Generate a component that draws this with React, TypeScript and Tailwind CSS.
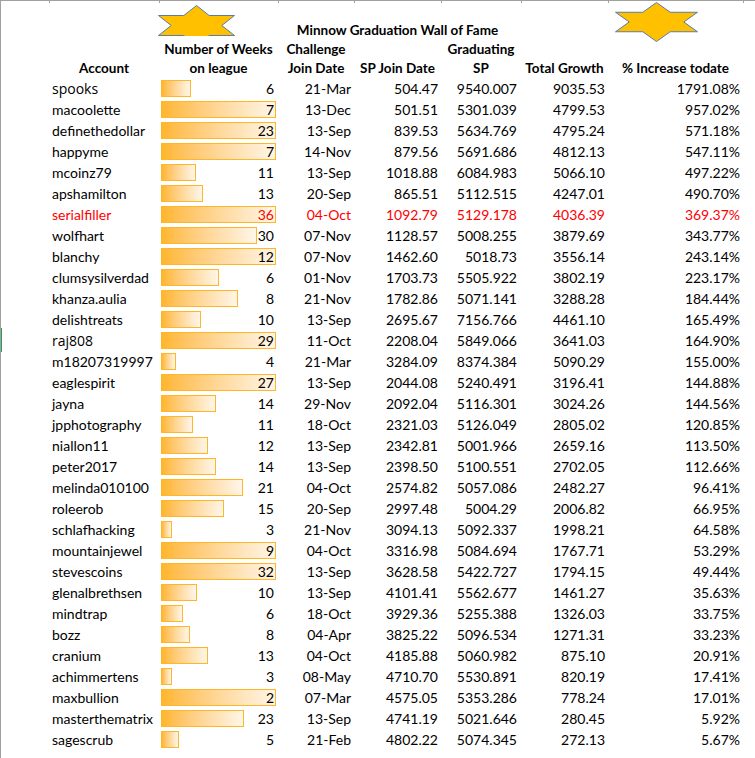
type Row = {
  name: string;
  weeks: number;
  bar: number;
  joined: string;
  spJoin: string;
  spGrad: string;
  growth: string;
  pct: string;
  red?: boolean;
  alt?: boolean;
};

const rows: Row[] = [
  { name: "spooks", weeks: 6, bar: 30, joined: "21-Mar", spJoin: "504.47", spGrad: "9540.007", growth: "9035.53", pct: "1791.08%", alt: true },
  { name: "macoolette", weeks: 7, bar: 115, joined: "13-Dec", spJoin: "501.51", spGrad: "5301.039", growth: "4799.53", pct: "957.02%" },
  { name: "definethedollar", weeks: 23, bar: 115, joined: "13-Sep", spJoin: "839.53", spGrad: "5634.769", growth: "4795.24", pct: "571.18%" },
  { name: "happyme", weeks: 7, bar: 115, joined: "14-Nov", spJoin: "879.56", spGrad: "5691.686", growth: "4812.13", pct: "547.11%" },
  { name: "mcoinz79", weeks: 11, bar: 35, joined: "13-Sep", spJoin: "1018.88", spGrad: "6084.983", growth: "5066.10", pct: "497.22%" },
  { name: "apshamilton", weeks: 13, bar: 42, joined: "20-Sep", spJoin: "865.51", spGrad: "5112.515", growth: "4247.01", pct: "490.70%" },
  { name: "serialfiller", weeks: 36, bar: 115, joined: "04-Oct", spJoin: "1092.79", spGrad: "5129.178", growth: "4036.39", pct: "369.37%", red: true },
  { name: "wolfhart", weeks: 30, bar: 96, joined: "07-Nov", spJoin: "1128.57", spGrad: "5008.255", growth: "3879.69", pct: "343.77%" },
  { name: "blanchy", weeks: 12, bar: 115, joined: "07-Nov", spJoin: "1462.60", spGrad: "5018.73", growth: "3556.14", pct: "243.14%" },
  { name: "clumsysilverdad", weeks: 6, bar: 58, joined: "01-Nov", spJoin: "1703.73", spGrad: "5505.922", growth: "3802.19", pct: "223.17%" },
  { name: "khanza.aulia", weeks: 8, bar: 77, joined: "21-Nov", spJoin: "1782.86", spGrad: "5071.141", growth: "3288.28", pct: "184.44%" },
  { name: "delishtreats", weeks: 10, bar: 40, joined: "13-Sep", spJoin: "2695.67", spGrad: "7156.766", growth: "4461.10", pct: "165.49%" },
  { name: "raj808", weeks: 29, bar: 115, joined: "11-Oct", spJoin: "2208.04", spGrad: "5849.066", growth: "3641.03", pct: "164.90%", alt: true },
  { name: "m18207319997", weeks: 4, bar: 15, joined: "21-Mar", spJoin: "3284.09", spGrad: "8374.384", growth: "5090.29", pct: "155.00%" },
  { name: "eaglespirit", weeks: 27, bar: 115, joined: "13-Sep", spJoin: "2044.08", spGrad: "5240.491", growth: "3196.41", pct: "144.88%" },
  { name: "jayna", weeks: 14, bar: 55, joined: "29-Nov", spJoin: "2092.04", spGrad: "5116.301", growth: "3024.26", pct: "144.56%" },
  { name: "jpphotography", weeks: 11, bar: 32, joined: "18-Oct", spJoin: "2321.03", spGrad: "5126.049", growth: "2805.02", pct: "120.85%" },
  { name: "niallon11", weeks: 12, bar: 47, joined: "13-Sep", spJoin: "2342.81", spGrad: "5001.966", growth: "2659.16", pct: "113.50%" },
  { name: "peter2017", weeks: 14, bar: 55, joined: "13-Sep", spJoin: "2398.50", spGrad: "5100.551", growth: "2702.05", pct: "112.66%" },
  { name: "melinda010100", weeks: 21, bar: 82, joined: "04-Oct", spJoin: "2574.82", spGrad: "5057.086", growth: "2482.27", pct: "96.41%" },
  { name: "roleerob", weeks: 15, bar: 63, joined: "20-Sep", spJoin: "2997.48", spGrad: "5004.29", growth: "2006.82", pct: "66.95%" },
  { name: "schlafhacking", weeks: 3, bar: 11, joined: "21-Nov", spJoin: "3094.13", spGrad: "5092.337", growth: "1998.21", pct: "64.58%" },
  { name: "mountainjewel", weeks: 9, bar: 115, joined: "04-Oct", spJoin: "3316.98", spGrad: "5084.694", growth: "1767.71", pct: "53.29%" },
  { name: "stevescoins", weeks: 32, bar: 115, joined: "13-Sep", spJoin: "3628.58", spGrad: "5422.727", growth: "1794.15", pct: "49.44%" },
  { name: "glenalbrethsen", weeks: 10, bar: 36, joined: "13-Sep", spJoin: "4101.41", spGrad: "5562.677", growth: "1461.27", pct: "35.63%" },
  { name: "mindtrap", weeks: 6, bar: 22, joined: "18-Oct", spJoin: "3929.36", spGrad: "5255.388", growth: "1326.03", pct: "33.75%" },
  { name: "bozz", weeks: 8, bar: 29, joined: "04-Apr", spJoin: "3825.22", spGrad: "5096.534", growth: "1271.31", pct: "33.23%" },
  { name: "cranium", weeks: 13, bar: 47, joined: "04-Oct", spJoin: "4185.88", spGrad: "5060.982", growth: "875.10", pct: "20.91%" },
  { name: "achimmertens", weeks: 3, bar: 11, joined: "08-May", spJoin: "4710.70", spGrad: "5530.891", growth: "820.19", pct: "17.41%" },
  { name: "maxbullion", weeks: 2, bar: 115, joined: "07-Mar", spJoin: "4575.05", spGrad: "5353.286", growth: "778.24", pct: "17.01%" },
  { name: "masterthematrix", weeks: 23, bar: 83, joined: "13-Sep", spJoin: "4741.19", spGrad: "5021.646", growth: "280.45", pct: "5.92%" },
  { name: "sagescrub", weeks: 5, bar: 18, joined: "21-Feb", spJoin: "4802.22", spGrad: "5074.345", growth: "272.13", pct: "5.67%" },
];

const cols = "grid grid-cols-[48px_110px_119px_76px_87px_80px_87px_135px_1fr]";

const Star = ({ w, h }: { w: number; h: number }) => {
  const f = [
    [0.5, 0], [0.667, 0.25], [1, 0.25], [0.833, 0.5], [1, 0.75], [0.667, 0.75],
    [0.5, 1], [0.333, 0.75], [0, 0.75], [0.167, 0.5], [0, 0.25], [0.333, 0.25],
  ];
  const pts = f.map(([x, y]) => `${0.5 + x * (w - 1)},${0.5 + y * (h - 1)}`).join(" ");
  return (
    <svg width={w} height={h} viewBox={`0 0 ${w} ${h}`}>
      <polygon points={pts} fill="#ffc000" stroke="#5b7bab" strokeWidth="1" />
    </svg>
  );
};

const App = () => {
  return (
    <div className="relative w-[755px] h-[758px] overflow-hidden bg-white border-l border-t border-[#a0a0a0] font-[Lato,sans-serif] text-[14px] text-black">
      {/* selected row marker */}
      <div className="absolute left-[-1px] top-[327px] h-[24px] w-[2px] bg-[#2b9a5a]" />

      {/* stars */}
      <div className="absolute left-[157px] top-[4px] h-[31px] overflow-hidden">
        <Star w={77} h={41} />
      </div>
      <div className="absolute left-[614px] top-[1px]">
        <Star w={83} h={40} />
      </div>

      {/* column ticks */}
      <div className={`${cols} h-[20px]`}>
        {Array.from({ length: 9 }).map((_, i) => (
          <div key={i}>{i > 0 && <div className="h-[2px] border-l border-[#a0a0a0]" />}</div>
        ))}
      </div>

      {/* header */}
      <div className="font-bold text-[13.5px] leading-[19px]">
        <div className={`${cols} h-[19px]`}>
          <div />
          <div />
          <div />
          <div />
          <div className="flex justify-center whitespace-nowrap">
            <span className="relative z-10">Minnow Graduation Wall of Fame</span>
          </div>
        </div>
        <div className={`${cols} h-[19px] relative z-10`}>
          <div />
          <div />
          <div className="text-center whitespace-nowrap">Number of Weeks</div>
          <div className="text-center">Challenge</div>
          <div />
          <div className="text-center">Graduating</div>
        </div>
        <div className={`${cols} h-[19px]`}>
          <div />
          <div className="text-center">Account</div>
          <div className="text-center">on league</div>
          <div className="text-center whitespace-nowrap">Join Date</div>
          <div className="text-center whitespace-nowrap">SP Join Date</div>
          <div className="text-center">SP</div>
          <div className="text-center whitespace-nowrap">Total Growth</div>
          <div className="text-center whitespace-nowrap">% Increase todate</div>
        </div>
      </div>

      {/* data */}
      <div>
        {rows.map((r) => (
          <div
            key={r.name}
            className={`${cols} h-[21px] leading-[21px] whitespace-nowrap ${r.red ? "text-[#ff0000]" : ""}`}
          >
            <div />
            <div className={`pl-[3px] ${r.alt ? "font-['Open_Sans',sans-serif]" : ""}`}>{r.name}</div>
            <div className="grid">
              <div className="col-start-1 row-start-1 pl-[2px] pt-[2px]">
                <div
                  className="h-[17px] border border-[#ffb628] bg-gradient-to-r from-[#ffb628] to-[#fff6e8]"
                  style={{ width: r.bar }}
                />
              </div>
              <div className="col-start-1 row-start-1 text-right pr-[4px]">{r.weeks}</div>
            </div>
            <div className="text-right pr-[3px]">{r.joined}</div>
            <div className="text-right pr-[3px]">{r.spJoin}</div>
            <div className="text-right pr-[4px]">{r.spGrad}</div>
            <div className="text-right pr-[3px]">{r.growth}</div>
            <div className="text-right pr-[3px]">{r.pct}</div>
          </div>
        ))}
      </div>
    </div>
  );
};

export default App;
